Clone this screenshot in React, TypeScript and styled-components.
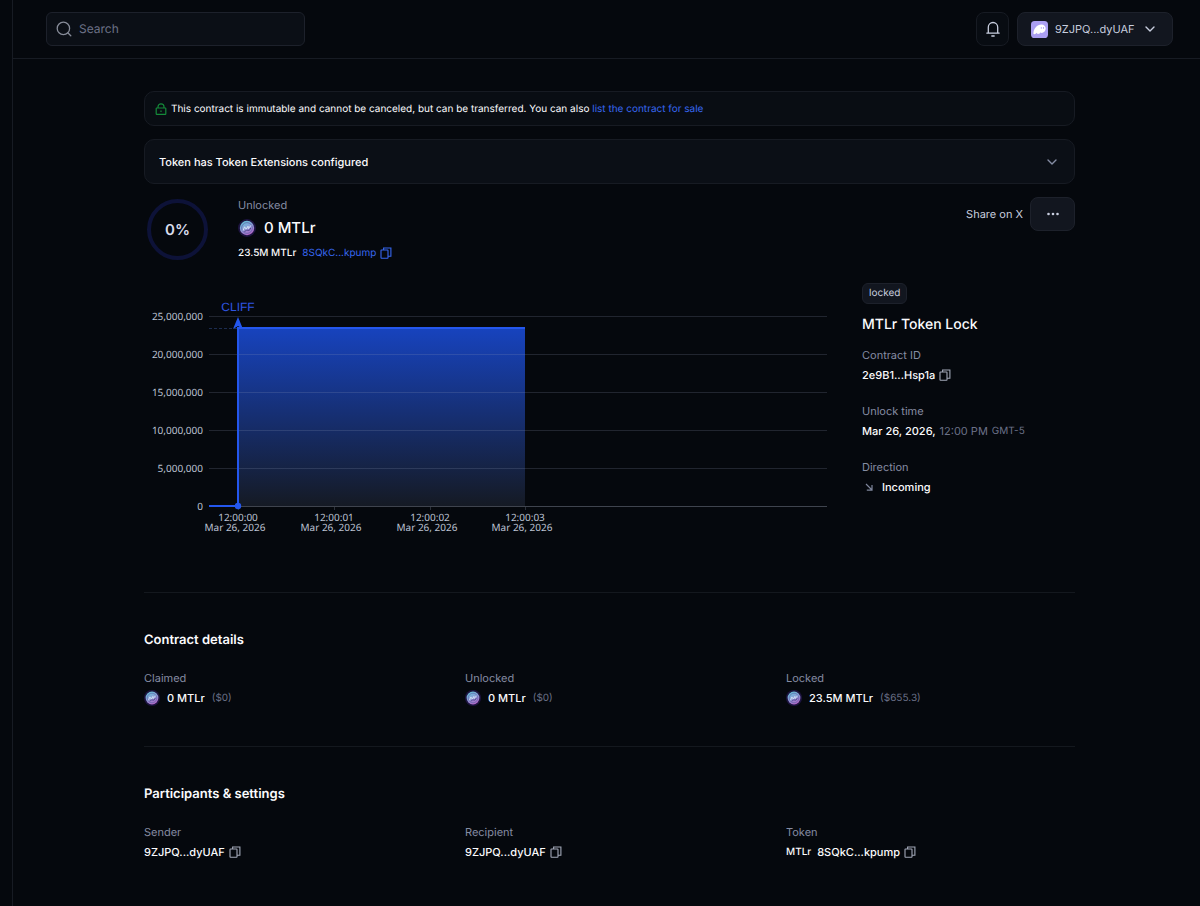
import React from "react";
import styled, { createGlobalStyle } from "styled-components";

const c = {
  page: "#05080d",
  panel: "#0b0f16",
  raised: "#12161f",
  line: "#171b23",
  edge: "#1d212b",
  muted: "#858ca3",
  dim: "#6b7188",
  soft: "#c8cedf",
  text: "#fbfbfd",
  blue: "#3767f0",
};

const GlobalStyle = createGlobalStyle`
  *, *::before, *::after { box-sizing: border-box; }
  body {
    margin: 0;
    background: ${c.page};
    color: ${c.text};
    font-family: Inter, "Liberation Sans", sans-serif;
    font-size: 11px;
    line-height: 16px;
    text-rendering: geometricPrecision;
  }
  h1, h2, p, dl, dd, dt { margin: 0; font-weight: inherit; }
  button, input { font: inherit; color: inherit; text-rendering: inherit; }
  button { cursor: pointer; }
  svg { display: block; flex: none; }
`;

const Shell = styled.div`
  display: flex;
  min-height: 100vh;
`;
const Rail = styled.aside`
  flex: none;
  width: 13px;
  border-right: 1px solid ${c.line};
`;
const Page = styled.div`
  flex: 1;
  min-width: 0;
`;
const TopBar = styled.header`
  display: flex;
  align-items: center;
  justify-content: space-between;
  height: 59px;
  padding: 0 27px 0 33px;
  border-bottom: 1px solid ${c.line};
`;
const SearchBox = styled.label`
  display: flex;
  align-items: center;
  gap: 7px;
  width: 259px;
  height: 34px;
  padding: 0 9px;
  border: 1px solid ${c.edge};
  border-radius: 6px;
  background: ${c.panel};
  color: #878c99;
`;
const SearchInput = styled.input`
  flex: 1;
  min-width: 0;
  padding: 0;
  border: 0;
  outline: 0;
  background: transparent;
  font-size: 12px;
  &::placeholder { color: #6b7186; opacity: 1; }
`;
const TopActions = styled.div`
  display: flex;
  gap: 8px;
`;
const Button = styled.button<{ $width: number; $flat?: boolean }>`
  display: flex;
  align-items: center;
  justify-content: center;
  gap: 7px;
  width: ${(p) => p.$width}px;
  height: 34px;
  padding: 0;
  border: 1px solid ${(p) => (p.$flat ? c.line : c.edge)};
  border-radius: 8px;
  background: ${(p) => (p.$flat ? "#080c12" : c.raised)};
  color: ${c.soft};
`;
const WalletButton = styled(Button)`
  justify-content: flex-start;
  padding: 0 13px;
`;
const WalletName = styled.span`
  margin-right: 3px;
`;
const Content = styled.main`
  padding: 32px 27px 40px 33px;
`;
const Column = styled.div`
  max-width: 931px;
  margin: 0 auto;
`;
const Notice = styled.div`
  display: flex;
  align-items: center;
  gap: 4px;
  height: 35px;
  padding: 0 10px;
  border: 1px solid ${c.line};
  border-radius: 10px;
  background: #090d13;
  font-size: 10px;
`;
const Link = styled.a<{ $plain?: boolean }>`
  color: ${(p) => (p.$plain ? c.soft : c.blue)};
  text-decoration: none;
`;
const Disclosure = styled.button`
  display: flex;
  align-items: center;
  justify-content: space-between;
  width: 100%;
  height: 45px;
  margin-top: 13px;
  padding: 0 17px 0 14px;
  border: 1px solid ${c.line};
  border-radius: 10px;
  background: ${c.panel};
  font-weight: 500;
`;
const Summary = styled.section`
  display: flex;
  align-items: flex-start;
  margin-top: 13px;
`;
const Ring = styled.div`
  display: flex;
  align-items: center;
  justify-content: center;
  width: 61px;
  height: 61px;
  margin: 2px 30px 0 3px;
  border: 4px solid #0d1238;
  border-radius: 50%;
  color: #d8dceb;
  font-size: 15px;
  font-weight: 600;
`;
const Stack = styled.div`
  flex: 1;
`;
const Label = styled.div`
  color: ${c.muted};
`;
const Row = styled.div<{ $gap?: number }>`
  display: flex;
  align-items: center;
  gap: ${(p) => p.$gap ?? 4}px;
`;
const Balance = styled(Row)`
  margin: 5px 0 7px;
  font-size: 15px;
  line-height: 20px;
  font-weight: 500;
`;
const Small = styled.span`
  margin-right: 2px;
  font-size: 10px;
  font-weight: 500;
`;
const SmallLink = styled(Link)`
  font-size: 10px;
`;
const IconButton = styled.button<{ $tone?: string }>`
  display: flex;
  padding: 0;
  border: 0;
  background: none;
  color: ${(p) => p.$tone ?? "#a3a8b8"};
`;
const Overview = styled.section`
  display: grid;
  grid-template-columns: minmax(0, 1fr) 213px;
  gap: 32px;
  margin-top: 22px;
  padding-bottom: 55px;
  border-bottom: 1px solid #14181e;
`;
const ChartSvg = styled.svg`
  width: 100%;
  height: auto;
  margin-top: 14px;
`;
const Tag = styled.span`
  display: inline-block;
  padding: 1px 6px;
  border: 1px solid ${c.edge};
  border-radius: 6px;
  background: ${c.raised};
  color: ${c.soft};
  font-size: 10px;
  line-height: 17px;
`;
const Title = styled.h1`
  margin: 12px 0 13px;
  font-size: 14px;
  line-height: 18px;
  font-weight: 500;
`;
const Fields = styled.dl`
  display: grid;
  gap: 20px;
`;
const Value = styled.dd`
  display: flex;
  align-items: center;
  gap: 4px;
  height: 16px;
  margin-top: 4px;
  font-weight: 500;
`;
const Faint = styled.span`
  color: ${c.dim};
  font-weight: 400;
`;
const FaintSmall = styled(Faint)`
  font-size: 10px;
`;
const Symbol = styled.small`
  margin-right: 2px;
  font-size: 10px;
`;
const Section = styled.section<{ $last?: boolean }>`
  padding: 38px 0 ${(p) => (p.$last ? 0 : 40)}px;
  border-bottom: ${(p) => (p.$last ? 0 : 1)}px solid #14181e;
`;
const Heading = styled.h2`
  margin-bottom: 21px;
  font-size: 13px;
  line-height: 18px;
  font-weight: 600;
`;
const Columns = styled.dl`
  display: grid;
  grid-template-columns: repeat(3, minmax(0, 1fr));
  gap: 32px;
`;

const SearchIcon = () => (
  <svg width="16" height="16" viewBox="0 0 16 16" fill="none" stroke="currentColor" strokeWidth="1.3" strokeLinecap="round">
    <circle cx="7.4" cy="7.4" r="6.2" />
    <path d="M12 12l2.8 2.8" />
  </svg>
);
const BellIcon = () => (
  <svg width="16" height="16" viewBox="0 0 16 16" fill="none" stroke="currentColor" strokeWidth="1.3" strokeLinecap="round" strokeLinejoin="round">
    <path d="M1.8 12.1h12.4M3.3 12V6.2a4.7 4.7 0 0 1 9.4 0V12M6.8 15h2.4" />
  </svg>
);
const Chevron = ({ tone }: { tone?: string }) => (
  <svg width="10" height="10" viewBox="0 0 10 10" fill="none" stroke={tone ?? "currentColor"} strokeWidth="1.4" strokeLinecap="round" strokeLinejoin="round">
    <path d="M1 3l4 4 4-4" />
  </svg>
);
const LockIcon = () => (
  <svg width="12" height="12" viewBox="0 0 12 12" fill="none" stroke="#158a3a" strokeWidth="1.2">
    <rect x="1.2" y="5" width="9.6" height="6.4" rx="0.6" />
    <path d="M3 5V3.8a3 3 0 0 1 6 0V5M6 7.6v1.4" />
  </svg>
);
const CopyIcon = () => (
  <svg width="12" height="12" viewBox="0 0 12 12" fill="none" stroke="currentColor" strokeWidth="1.1">
    <rect x="1" y="3" width="7" height="8.2" rx="0.5" />
    <path d="M3.6 3V1h7.3v8.2H8" />
  </svg>
);
const WalletIcon = () => (
  <svg width="17" height="17" viewBox="0 0 17 17">
    <rect width="17" height="17" rx="3.6" fill="#ab9ff2" />
    <path d="M2.4 12.2C2.6 8 6 3.6 10.4 3.6c2.6 0 4.3 1.7 4.3 4 0 2.7-2.2 4.4-3.9 4.4-.7 0-.9-.5-.7-1.1-.8 1.1-2 2-3.1 2-.8 0-1.1-.5-1.1-1.1-.8.9-1.7 1.4-2.5 1.4-.6 0-1-.4-1-1z" fill="#fff" />
    <ellipse cx="10.3" cy="6.9" rx=".55" ry=".9" fill="#ab9ff2" />
    <ellipse cx="12.5" cy="6.9" rx=".55" ry=".9" fill="#ab9ff2" />
  </svg>
);
const TokenIcon = ({ size }: { size: number }) => (
  <svg width={size} height={size} viewBox="0 0 18 18">
    <defs>
      <linearGradient id="coin" x1="0.2" y1="0" x2="0.7" y2="1">
        <stop offset="0" stopColor="#62c6d8" />
        <stop offset="0.5" stopColor="#8d9bd8" />
        <stop offset="1" stopColor="#b55fc4" />
      </linearGradient>
    </defs>
    <circle cx="9" cy="9" r="9" fill="#1d1440" />
    <circle cx="9" cy="9" r="7.2" fill="url(#coin)" />
    <circle cx="9" cy="9" r="5.4" fill="none" stroke="#5a62a4" strokeWidth="0.7" />
    <path d="M5 11.6l1.6-3.8 1.6 2.4 1.8-3 .4 2.4 2.6-3.2" fill="none" stroke="#d8ecf7" strokeWidth="0.9" />
    <path d="M6.4 12.6l2.3-1.4 2.6.2 1.5-2.4" fill="none" stroke="#4a3d86" strokeWidth="0.9" />
  </svg>
);
const DotsIcon = () => (
  <svg width="14" height="4" viewBox="0 0 14 4" fill="currentColor">
    <circle cx="2.5" cy="2" r="1.3" />
    <circle cx="7" cy="2" r="1.3" />
    <circle cx="11.5" cy="2" r="1.3" />
  </svg>
);
const IncomingIcon = () => (
  <svg width="16" height="12" viewBox="0 0 16 12" fill="none" stroke="#7f869c" strokeWidth="1.2">
    <path d="M4 3l6 6M10 4v5.2H4.8" />
  </svg>
);

const Copy = ({ of, tone }: { of: string; tone?: string }) => (
  <IconButton type="button" aria-label={`Copy ${of}`} $tone={tone}>
    <CopyIcon />
  </IconButton>
);

const yTicks = [
  { y: 19, label: "25,000,000" },
  { y: 57, label: "20,000,000" },
  { y: 95, label: "15,000,000" },
  { y: 133, label: "10,000,000" },
  { y: 171, label: "5,000,000" },
  { y: 209, label: "0" },
];
const xTicks = [
  { x: 94, time: "12:00:00" },
  { x: 190, time: "12:00:01" },
  { x: 286, time: "12:00:02" },
  { x: 381, time: "12:00:03" },
];

const AxisText = styled.text`
  fill: #bcc2d2;
  font-family: "Noto Sans", sans-serif;
  font-size: 10px;
`;
const CliffText = styled.text`
  fill: #2f55e0;
  font-family: "Liberation Sans", sans-serif;
  font-size: 12px;
`;

const UnlockChart = () => (
  <ChartSvg viewBox="0 0 686 240" role="img" aria-label="Unlock schedule">
    <defs>
      <linearGradient id="area" x1="0" y1="0" x2="0" y2="1">
        <stop offset="0" stopColor="#1743be" />
        <stop offset="1" stopColor="#151a24" />
      </linearGradient>
    </defs>
    <path d="M65 31.5h29" stroke="#1c2c50" strokeDasharray="3 2" />
    <rect x="94" y="31" width="287" height="178" fill="url(#area)" />
    {yTicks.map((t) => (
      <g key={t.label}>
        <path d={`M65 ${t.y + 0.5}h618`} stroke={t.y === 209 ? "#3f444e" : "#8f9bb8"} strokeOpacity={t.y === 209 ? 1 : 0.2} />
        <AxisText x="59" y={t.y + 4} textAnchor="end">{t.label}</AxisText>
      </g>
    ))}
    {xTicks.map((t) => (
      <g key={t.time}>
        <path d={`M${t.x + 0.5} 210v3`} stroke="#2b3039" />
        <AxisText x={t.x} y="224" textAnchor="middle">{t.time}</AxisText>
        <AxisText x={t.x - 3} y="234" textAnchor="middle">Mar 26, 2026</AxisText>
      </g>
    ))}
    <path d="M65 209h29V31h287" fill="none" stroke="#2457ee" strokeWidth="2" />
    <path d="M94 20l5 12-5-3-5 3z" fill="#2457ee" />
    <circle cx="94" cy="209" r="3.2" fill="#2457ee" />
    <CliffText x="94" y="14" textAnchor="middle">CLIFF</CliffText>
  </ChartSvg>
);

const Amount = ({ label, value, usd }: { label: string; value: string; usd: string }) => (
  <div>
    <Label as="dt">{label}</Label>
    <Value>
      <Row $gap={7}>
        <TokenIcon size={16} />
        {value}
        <FaintSmall>{usd}</FaintSmall>
      </Row>
    </Value>
  </div>
);

export default function App() {
  return (
    <>
      <GlobalStyle />
      <Shell>
        <Rail />
        <Page>
          <TopBar>
            <SearchBox>
              <SearchIcon />
              <SearchInput type="search" placeholder="Search" aria-label="Search" />
            </SearchBox>
            <TopActions>
              <Button type="button" $width={33} $flat aria-label="Notifications">
                <BellIcon />
              </Button>
              <WalletButton type="button" $width={156}>
                <WalletIcon />
                <WalletName>9ZJPQ...dyUAF</WalletName>
                <Chevron />
              </WalletButton>
            </TopActions>
          </TopBar>
          <Content>
            <Column>
              <Notice>
                <LockIcon />
                <p>
                  This contract is immutable and cannot be canceled, but can be transferred. You can also{" "}
                  <Link href="#sale">list the contract for sale</Link>
                </p>
              </Notice>
              <Disclosure type="button" aria-expanded="false">
                <span>Token has Token Extensions configured</span>
                <Chevron tone={c.muted} />
              </Disclosure>
              <Summary>
                <Ring>0%</Ring>
                <Stack>
                  <Label>Unlocked</Label>
                  <Balance $gap={8}>
                    <TokenIcon size={18} />
                    0 MTLr
                  </Balance>
                  <Row>
                    <Small>23.5M MTLr</Small>
                    <SmallLink href="#token">8SQkC...kpump</SmallLink>
                    <Copy of="token address" tone={c.blue} />
                  </Row>
                </Stack>
                <Row $gap={7}>
                  <Link href="#share" $plain>Share on X</Link>
                  <Button type="button" $width={45} aria-label="More actions">
                    <DotsIcon />
                  </Button>
                </Row>
              </Summary>
              <Overview>
                <UnlockChart />
                <div>
                  <Tag>locked</Tag>
                  <Title>MTLr Token Lock</Title>
                  <Fields>
                    <div>
                      <Label as="dt">Contract ID</Label>
                      <Value>
                        2e9B1...Hsp1a
                        <Copy of="contract ID" />
                      </Value>
                    </div>
                    <div>
                      <Label as="dt">Unlock time</Label>
                      <Value>
                        Mar 26, 2026, <Faint>12:00 PM</Faint> <FaintSmall>GMT-5</FaintSmall>
                      </Value>
                    </div>
                    <div>
                      <Label as="dt">Direction</Label>
                      <Value>
                        <IncomingIcon />
                        Incoming
                      </Value>
                    </div>
                  </Fields>
                </div>
              </Overview>
              <Section>
                <Heading>Contract details</Heading>
                <Columns>
                  <Amount label="Claimed" value="0 MTLr" usd="($0)" />
                  <Amount label="Unlocked" value="0 MTLr" usd="($0)" />
                  <Amount label="Locked" value="23.5M MTLr" usd="($655.3)" />
                </Columns>
              </Section>
              <Section $last>
                <Heading>Participants &amp; settings</Heading>
                <Columns>
                  <div>
                    <Label as="dt">Sender</Label>
                    <Value>
                      9ZJPQ...dyUAF
                      <Copy of="sender address" />
                    </Value>
                  </div>
                  <div>
                    <Label as="dt">Recipient</Label>
                    <Value>
                      9ZJPQ...dyUAF
                      <Copy of="recipient address" />
                    </Value>
                  </div>
                  <div>
                    <Label as="dt">Token</Label>
                    <Value>
                      <Symbol>MTLr</Symbol>
                      8SQkC...kpump
                      <Copy of="token address" />
                    </Value>
                  </div>
                </Columns>
              </Section>
            </Column>
          </Content>
        </Page>
      </Shell>
    </>
  );
}
